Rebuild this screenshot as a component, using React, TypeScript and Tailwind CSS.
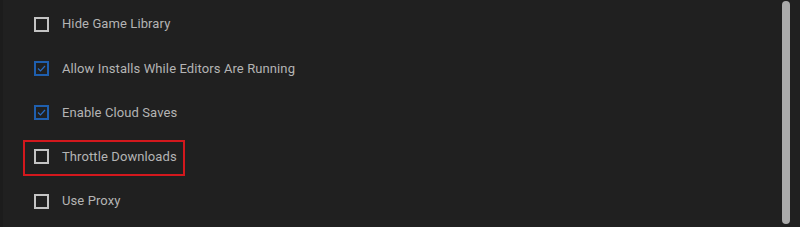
import type { ReactNode } from "react";

type Option = { label: string; checked: boolean; highlight?: boolean };

const options: Option[] = [
  { label: "Hide Game Library", checked: false },
  { label: "Allow Installs While Editors Are Running", checked: true },
  { label: "Enable Cloud Saves", checked: true },
  { label: "Throttle Downloads", checked: false, highlight: true },
  { label: "Use Proxy", checked: false },
];

function Box({ checked }: { checked: boolean }) {
  if (checked) {
    return (
      <span className="w-[15px] h-[15px] border-2 border-[#1f5fae] flex items-center justify-center shrink-0">
        <svg width="9" height="7" viewBox="0 0 9 7" fill="none">
          <path d="M1 3.5 L3.5 6 L8 1" stroke="#2a6cc0" strokeWidth="1.2" />
        </svg>
      </span>
    );
  }
  return <span className="w-[15px] h-[15px] border-2 border-[#c4c4c4] shrink-0" />;
}

function Row({ opt }: { opt: Option }): ReactNode {
  const inner = (
    <div className="flex items-center gap-[13px] h-[44px] pl-[31px]">
      <Box checked={opt.checked} />
      <span className="text-[13px] text-[#b4b4b4] tracking-[0.1px]">{opt.label}</span>
    </div>
  );
  if (opt.highlight) {
    return (
      <div className="relative">
        {inner}
        <div className="absolute left-[20px] top-[5px] w-[162px] h-[36px] border-2 border-[#d3181d] pointer-events-none" />
      </div>
    );
  }
  return inner;
}

export default function App() {
  return (
    <div
      className="w-[800px] h-[227px] bg-[#202020] flex overflow-hidden"
      style={{ fontFamily: "Roboto, 'Noto Sans', sans-serif" }}
    >
      <div className="w-[3px] bg-[#1c1c1c]" />
      <div className="flex-1 pt-[2px] flex flex-col gap-[0.3px]">
        {options.map((o) => (
          <Row key={o.label} opt={o} />
        ))}
      </div>
      <div className="w-[8px] py-[1px] mr-[10px]">
        <div className="h-[223px] rounded-full bg-[#ababab]" />
      </div>
    </div>
  );
}
